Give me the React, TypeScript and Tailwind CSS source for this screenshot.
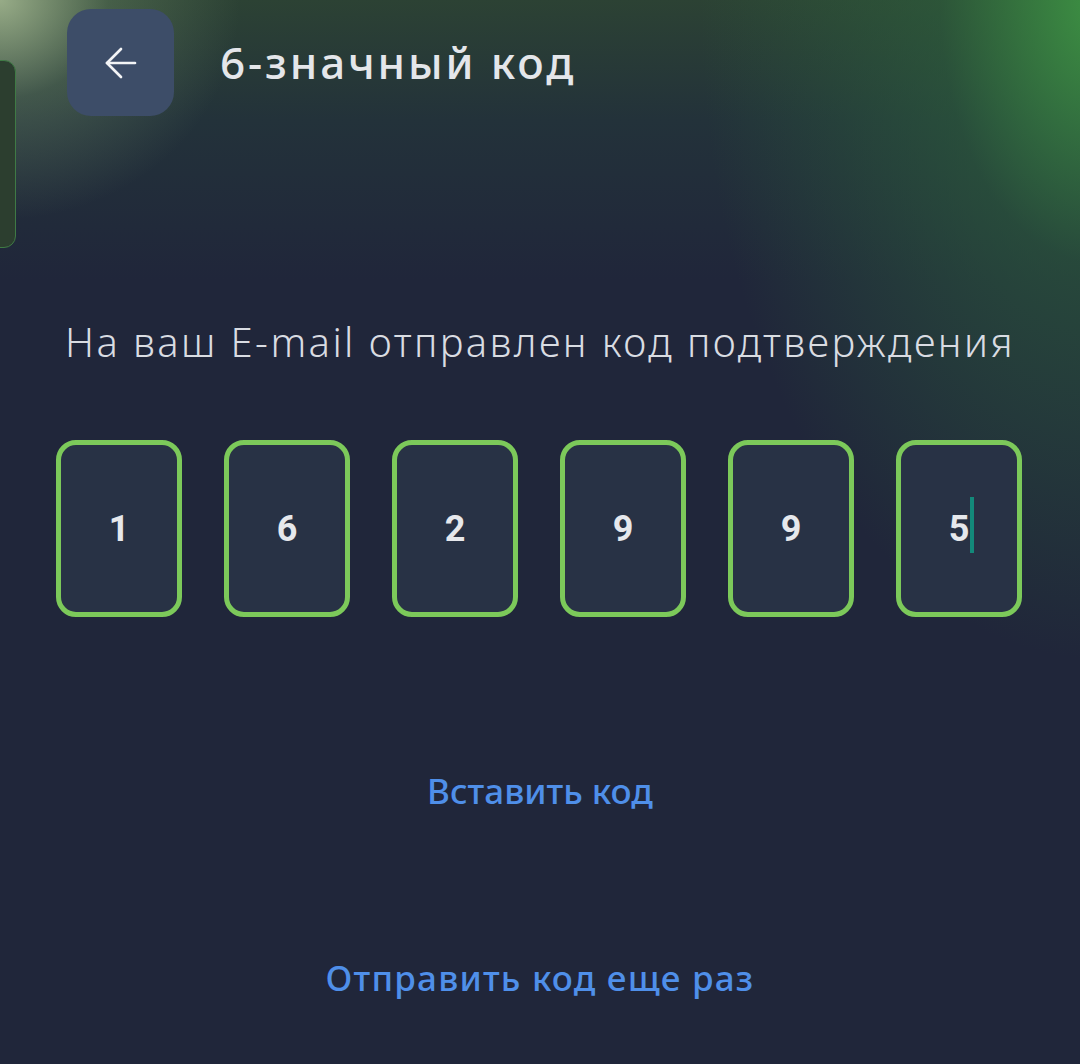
import React from 'react';

const digits = ['1', '6', '2', '9', '9', '5'];

function CodeBox({ value, active }: { value: string; active: boolean }) {
  return (
    <div className="w-[126px] h-[177px] rounded-[20px] border-[5px] border-[#7cc95a] bg-[#283245] flex items-center justify-center">
      <span className="relative text-[36px] font-bold text-[#e6e8ec] font-['Roboto',sans-serif] leading-none">
        {value}
        {active && (
          <span className="absolute left-full top-[-14px] ml-[1px] w-[4px] h-[56px] bg-[#13897a]" />
        )}
      </span>
    </div>
  );
}

export default function App() {
  return (
    <div
      className="relative w-[1080px] h-[1064px] overflow-hidden bg-[#20263a] font-['Noto_Sans',sans-serif]
                 bg-[radial-gradient(ellipse_240px_220px_at_0px_0px,rgba(170,190,150,0.85),rgba(120,150,110,0.35)_45%,transparent_100%),radial-gradient(ellipse_400px_660px_at_1100px_0px,rgba(62,150,68,0.95),rgba(45,100,60,0.55)_40%,transparent_100%),linear-gradient(180deg,#2c4234_0px,#23323a_120px,#20263a_280px)]"
    >
      {/* card peeking from the left edge */}
      <div className="absolute left-[-30px] top-[60px] w-[46px] h-[188px] rounded-[12px] border border-[#3f7a45] bg-[#2c3e2f]" />

      <div className="relative flex items-center gap-[46px] pl-[67px] pt-[9px]">
        <button className="w-[107px] h-[107px] rounded-[24px] bg-[#3d4d68] flex items-center justify-center">
          <svg width="48" height="48" viewBox="0 0 24 24" fill="none" stroke="#f3f4f6" strokeWidth="1.35" strokeLinecap="round" strokeLinejoin="round">
            <path d="M19 12H5" />
            <path d="M12 19l-7-7 7-7" />
          </svg>
        </button>
        <h1 className="text-[44px] font-medium text-[#e4e6ea] tracking-[2.9px] leading-none pb-[2px]">6-значный код</h1>
      </div>

      <p className="relative mt-[206px] text-center text-[40px] font-light text-[#d9dce2] leading-none tracking-[2.4px]">
        На ваш E-mail отправлен код подтверждения
      </p>

      <div className="relative mt-[78px] flex gap-[42px] pl-[56px]">
        {digits.map((d, i) => (
          <CodeBox key={i} value={d} active={i === digits.length - 1} />
        ))}
      </div>

      <div className="relative mt-[156px] text-center text-[35px] font-medium text-[#4f8fe9] leading-none">
        Вставить код
      </div>

      <div className="relative mt-[152px] text-center text-[35px] font-medium text-[#4f8fe9] leading-none tracking-[1.2px]">
        Отправить код еще раз
      </div>
    </div>
  );
}
